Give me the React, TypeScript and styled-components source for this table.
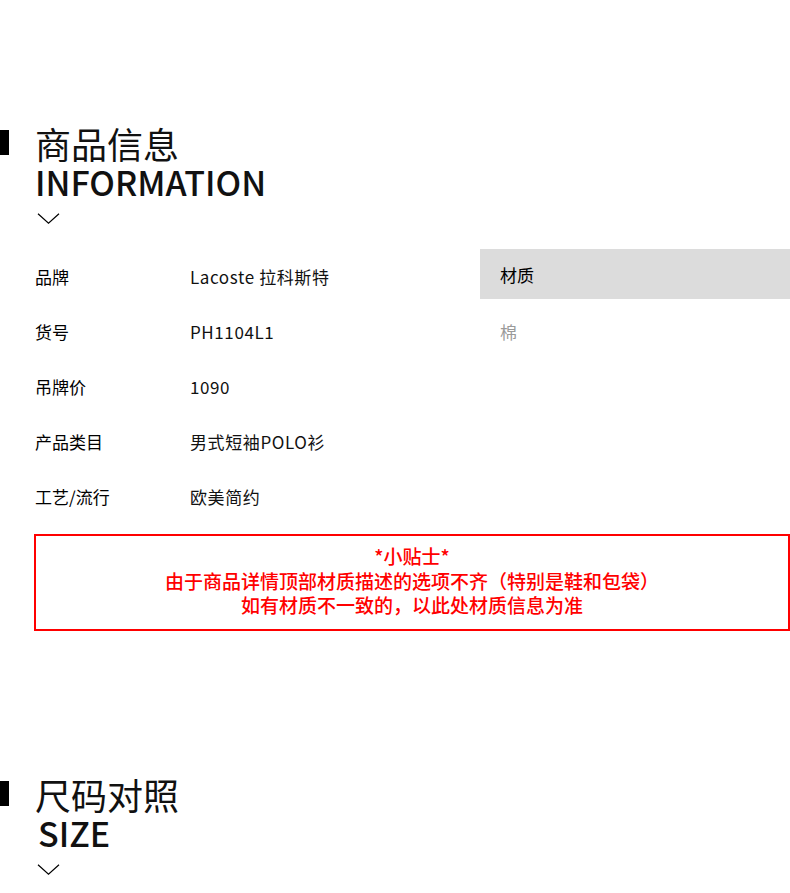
import React from 'react';
import styled, { createGlobalStyle } from 'styled-components';

const GlobalStyle = createGlobalStyle`
    html, body {
        margin: 0;
        padding: 0;
        background: #fff;
    }
    body {
        font-family: "Noto Sans CJK SC", "Noto Sans", sans-serif;
        color: #000;
    }
`;

const Chevron = () => (
    <svg width="23" height="11" viewBox="0 0 23 11" fill="none">
        <path d="M1 0.8 L11.5 10.2 L22 0.8" stroke="#000" strokeWidth="1.2" />
    </svg>
);

const rows = [
    ['品牌', 'Lacoste 拉科斯特'],
    ['货号', 'PH1104L1'],
    ['吊牌价', '1090'],
    ['产品类目', '男式短袖POLO衫'],
    ['工艺/流行', '欧美简约'],
];

const App = () => {
    return (
        <Page>
            <GlobalStyle />
            <Section>
                <TitleRow>
                    <Marker />
                    <Titles>
                        <CnTitle>商品信息</CnTitle>
                        <EnTitle>INFORMATION</EnTitle>
                        <ChevronWrap><Chevron /></ChevronWrap>
                    </Titles>
                </TitleRow>
                <InfoGrid>
                    <AttrList>
                        {rows.map(([k, v]) => (
                            <AttrRow key={k}>
                                <AttrLabel>{k}</AttrLabel>
                                <AttrValue>{v}</AttrValue>
                            </AttrRow>
                        ))}
                    </AttrList>
                    <Material>
                        <MaterialHead>材质</MaterialHead>
                        <MaterialValue>棉</MaterialValue>
                    </Material>
                </InfoGrid>
                <TipBox>
                    <TipLine>*小贴士*</TipLine>
                    <TipLine>由于商品详情顶部材质描述的选项不齐（特别是鞋和包袋）</TipLine>
                    <TipLine>如有材质不一致的，以此处材质信息为准</TipLine>
                </TipBox>
            </Section>
            <SizeSection>
                <TitleRow>
                    <Marker />
                    <Titles>
                        <CnTitle>尺码对照</CnTitle>
                        <EnTitle $indent>SIZE</EnTitle>
                        <ChevronWrap><Chevron /></ChevronWrap>
                    </Titles>
                </TitleRow>
            </SizeSection>
        </Page>
    );
};

const Page = styled.main`
    width: 790px;
    overflow: hidden;
`;

const Section = styled.section`
    padding-top: 123px;
`;

const SizeSection = styled.section`
    padding-top: 143px;
`;

const TitleRow = styled.div`
    display: flex;
    align-items: flex-start;
`;

const Marker = styled.span`
    flex: none;
    width: 9px;
    height: 25px;
    margin-top: 7px;
    margin-right: 26px;
    background: #000;
`;

const Titles = styled.div`
    display: flex;
    flex-direction: column;
`;

const CnTitle = styled.h2`
    margin: 0;
    font-size: 36px;
    line-height: 40px;
    font-weight: 400;
    color: #111;
`;

const EnTitle = styled.h3<{ $indent?: boolean }>`
    margin: 0;
    padding-left: ${p => (p.$indent ? 3 : 0)}px;
    font-size: 34px;
    line-height: 38px;
    font-weight: 500;
    color: #111;
`;

const ChevronWrap = styled.div`
    display: flex;
    padding-top: 12px;
    padding-left: 2px;
    height: 11px;
`;

const InfoGrid = styled.div`
    display: grid;
    grid-template-columns: 480px 310px;
    margin-top: 25px;
`;

const AttrList = styled.div`
    display: flex;
    flex-direction: column;
`;

const AttrRow = styled.div`
    display: grid;
    grid-template-columns: 155px 1fr;
    align-items: center;
    height: 55px;
    padding-left: 35px;
    font-size: 17px;
`;

const AttrLabel = styled.span`
    color: #000;
`;

const AttrValue = styled.span`
    color: #111;
    letter-spacing: 0.6px;
`;

const Material = styled.div`
    display: flex;
    flex-direction: column;
`;

const MaterialHead = styled.div`
    display: flex;
    align-items: center;
    height: 50px;
    padding-left: 20px;
    background: #dcdcdc;
    font-size: 17px;
    color: #000;
`;

const MaterialValue = styled.div`
    display: flex;
    align-items: center;
    height: 65px;
    padding-left: 20px;
    font-size: 17px;
    color: #9a9a9a;
`;

const TipBox = styled.div`
    margin: 10px 0 0 34px;
    border: 2px solid #ff0000;
    padding: 8px 0 11px;
    text-align: center;
    color: #ff0000;
`;

const TipLine = styled.p`
    margin: 0;
    font-size: 19px;
    line-height: 24.5px;
    font-weight: 500;
`;

export default App;
